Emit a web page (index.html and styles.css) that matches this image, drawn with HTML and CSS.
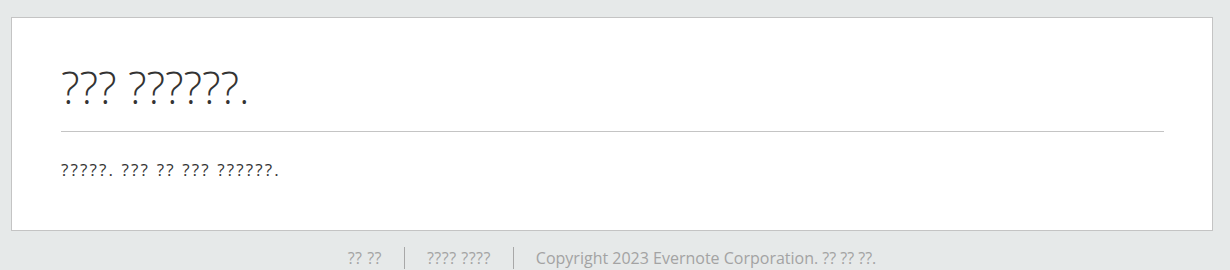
FILE: index.html
```html
<!DOCTYPE html>
<html lang="ko">
<head>
    <meta charset="UTF-8">
    <meta name="viewport" content="width=device-width, initial-scale=1.0">
    <title>Evernote</title>
    <link rel="stylesheet" href="styles.css">
</head>
<body>
    <div class="box">
        <h1>??? ??????.</h1>
        <hr>
        <p>?????. ??? ?? ??? ??????.</p>
    </div>

    <!-- 하단 링크 -->
    <div class="footer">
        <a href="#">?? ??</a>
        <span class="sep"></span>
        <a href="#">???? ????</a>
        <span class="sep"></span>
        <span>Copyright 2023 Evernote Corporation. ?? ?? ??.</span>
    </div>
</body>
</html>
```

FILE: styles.css
```css
body {
    margin: 0;
    padding: 17px 17px 0 11px;
    background-color: #e6e9e9;
    font-family: "Open Sans", "Noto Sans CJK KR", sans-serif;
    color: #333;
}

.box {
    background-color: #fff;
    border: 1px solid #c4c4c4;
    padding: 26px 48px 48px 49px;
}

.box h1 {
    margin: 0;
    font-size: 44px;
    font-weight: 300;
    line-height: 87px;
}

.box hr {
    margin: 0;
    border: none;
    border-top: 1px solid #c4c4c4;
}

.box p {
    margin: 26px 0 0;
    font-size: 17px;
    letter-spacing: 2.15px;
    line-height: 24px;
}

.footer {
    display: flex;
    justify-content: center;
    align-items: center;
    height: 22px;
    margin-top: 16px;
    font-size: 16px;
    color: #a3a3a3;
}

.footer a {
    color: #a3a3a3;
    text-decoration: none;
    letter-spacing: 0.5px;
}

.footer .sep {
    width: 1px;
    height: 22px;
    margin: 0 22px;
    background-color: #a8a8a8;
}
```
